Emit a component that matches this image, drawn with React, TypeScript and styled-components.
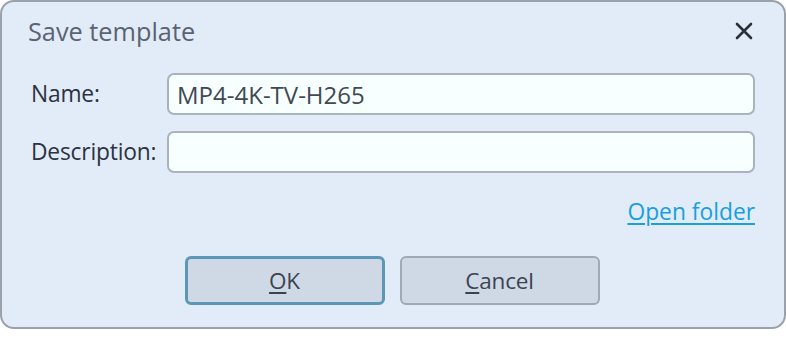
import React from "react";
import styled, { createGlobalStyle } from "styled-components";

const Global = createGlobalStyle`
  html, body { margin: 0; padding: 0; background: #ffffff; }
  body { font-family: "Open Sans", "Noto Sans", sans-serif; }
`;

const Dialog = styled.div`
  box-sizing: border-box;
  width: 786px;
  height: 329px;
  background: #e2ecf8;
  border: 2px solid #9ba1aa;
  border-radius: 14px;
  display: flex;
  flex-direction: column;
  padding: 12px 29px 0 26px;
`;

const Header = styled.div`
  display: flex;
  align-items: center;
  justify-content: space-between;
  height: 34px;
`;

const Title = styled.div`
  font-size: 25.3px;
  line-height: 34px;
  color: #5b6270;
`;

const Close = styled.button`
  border: none;
  background: transparent;
  padding: 0;
  width: 20px;
  height: 20px;
  display: flex;
  align-items: center;
  justify-content: center;
  margin-right: 1px;
`;

const Form = styled.div`
  display: grid;
  grid-template-columns: 139px 1fr;
  row-gap: 16px;
  margin-top: 25px;
  align-items: center;
`;

const Label = styled.label`
  font-size: 22.8px;
  line-height: 30px;
  letter-spacing: -0.2px;
  color: #2c3340;
  padding-left: 3px;
`;

const Input = styled.input`
  box-sizing: border-box;
  height: 42px;
  width: 100%;
  border: 2px solid #a9b2bf;
  border-radius: 7px;
  background: #f7ffff;
  font-family: "Open Sans", "Noto Sans", sans-serif;
  font-size: 24px;
  color: #414856;
  padding: 0 8px;
  outline: none;
`;

const LinkRow = styled.div`
  display: flex;
  justify-content: flex-end;
  margin-top: 24px;
  height: 30px;
`;

const Link = styled.a`
  font-size: 22.8px;
  line-height: 30px;
  color: #199fe0;
  text-decoration: underline;
  text-decoration-thickness: 1.5px;
  text-underline-offset: 3px;
  cursor: pointer;
`;

const Buttons = styled.div`
  display: flex;
  justify-content: center;
  gap: 15px;
  margin-top: 29px;
  padding-left: 1px;
`;

const Button = styled.button<{ $primary?: boolean }>`
  box-sizing: border-box;
  width: 200px;
  height: 49px;
  background: #cfd9e5;
  border: ${(p) => (p.$primary ? "3px solid #5c98b5" : "2px solid #a1a9b4")};
  border-radius: 6px;
  font-family: "Open Sans", "Noto Sans", sans-serif;
  font-size: 22.5px;
  letter-spacing: -0.2px;
  color: #3b4352;
  padding: 0;
  u { text-underline-offset: 3px; }
`;

export default function App() {
  return (
    <>
      <Global />
      <Dialog>
        <Header>
          <Title>Save template</Title>
          <Close aria-label="Close">
            <svg width="18" height="18" viewBox="0 0 18 18">
              <path d="M2 2 L16 16 M16 2 L2 16" stroke="#2b3038" strokeWidth="2.6" strokeLinecap="round" />
            </svg>
          </Close>
        </Header>
        <Form>
          <Label>Name:</Label>
          <Input defaultValue="MP4-4K-TV-H265" />
          <Label>Description:</Label>
          <Input defaultValue="" />
        </Form>
        <LinkRow>
          <Link>Open folder</Link>
        </LinkRow>
        <Buttons>
          <Button $primary>
            <u>O</u>K
          </Button>
          <Button>
            <u>C</u>ancel
          </Button>
        </Buttons>
      </Dialog>
    </>
  );
}
